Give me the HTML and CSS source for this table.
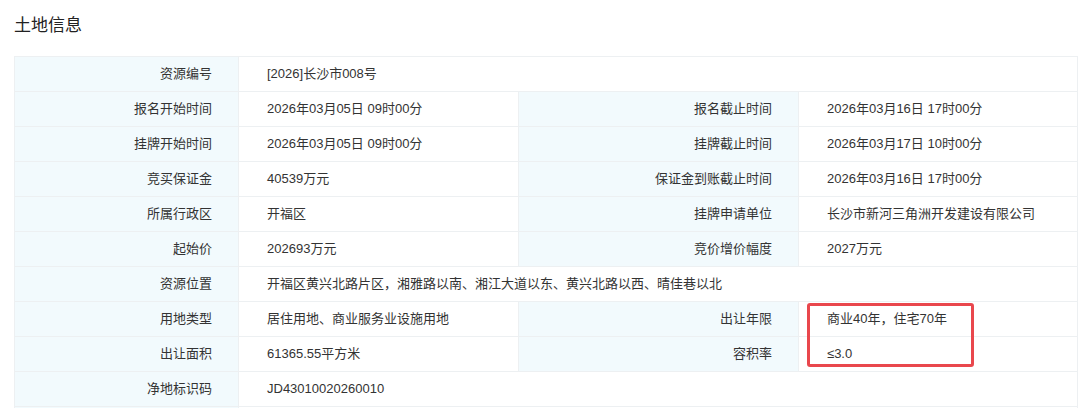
FILE: index.html
```html
<!DOCTYPE html>
<html>

<head>
    <title>土地信息</title>
    <link rel="stylesheet" href="styles.css">
</head>

<body>
    <div class="container">
        <h2 class="title">土地信息</h2>
        <div class="table-wrap">
            <table class="info-table">
                <colgroup>
                    <col class="col-label">
                    <col class="col-value">
                    <col class="col-label2">
                    <col class="col-value2">
                </colgroup>
                <tr>
                    <th>资源编号</th>
                    <td colspan="3">[2026]长沙市008号</td>
                </tr>
                <tr>
                    <th>报名开始时间</th>
                    <td>2026年03月05日 09时00分</td>
                    <th>报名截止时间</th>
                    <td>2026年03月16日 17时00分</td>
                </tr>
                <tr>
                    <th>挂牌开始时间</th>
                    <td>2026年03月05日 09时00分</td>
                    <th>挂牌截止时间</th>
                    <td>2026年03月17日 10时00分</td>
                </tr>
                <tr>
                    <th>竞买保证金</th>
                    <td>40539万元</td>
                    <th>保证金到账截止时间</th>
                    <td>2026年03月16日 17时00分</td>
                </tr>
                <tr>
                    <th>所属行政区</th>
                    <td>开福区</td>
                    <th>挂牌申请单位</th>
                    <td>长沙市新河三角洲开发建设有限公司</td>
                </tr>
                <tr>
                    <th>起始价</th>
                    <td>202693万元</td>
                    <th>竞价增价幅度</th>
                    <td>2027万元</td>
                </tr>
                <tr>
                    <th>资源位置</th>
                    <td colspan="3">开福区黄兴北路片区，湘雅路以南、湘江大道以东、黄兴北路以西、晴佳巷以北</td>
                </tr>
                <tr>
                    <th>用地类型</th>
                    <td>居住用地、商业服务业设施用地</td>
                    <th>出让年限</th>
                    <td>商业40年，住宅70年</td>
                </tr>
                <tr>
                    <th>出让面积</th>
                    <td>61365.55平方米</td>
                    <th>容积率</th>
                    <td>≤3.0</td>
                </tr>
                <tr>
                    <th>净地标识码</th>
                    <td colspan="3">JD43010020260010</td>
                </tr>
                <tr>
                    <th></th>
                    <td colspan="3"></td>
                </tr>
            </table>
            <div class="highlight"></div>
        </div>
    </div>
</body>

</html>
```

FILE: styles.css
```css
body {
    background: #ffffff;
    font-family: 'Liberation Sans', 'Noto Sans CJK SC', sans-serif;
    margin: 0;
    padding: 0;
    color: #333333;
}

.container {
    padding: 0 14px;
}

.title {
    font-size: 17px;
    font-weight: normal;
    color: #222222;
    margin: 0;
    padding-top: 14px;
    line-height: 24px;
    height: 42px;
}

.table-wrap {
    position: relative;
    width: 1063px;
}

.info-table {
    border-collapse: collapse;
    table-layout: fixed;
    width: 1063px;
    font-size: 13px;
}

.col-label {
    width: 224px;
}

.col-value {
    width: 280px;
}

.col-label2 {
    width: 280px;
}

.col-value2 {
    width: 279px;
}

.info-table th,
.info-table td {
    border: 1px solid #edf0f2;
    height: 34px;
    padding: 0;
    line-height: 18px;
    white-space: nowrap;
}

.info-table th {
    background: #f2fafd;
    font-weight: normal;
    text-align: right;
    padding-right: 26px;
    color: #333333;
}

.info-table td {
    background: #ffffff;
    text-align: left;
    padding-left: 28px;
}

.highlight {
    position: absolute;
    left: 793px;
    top: 247px;
    width: 161px;
    height: 58px;
    border: 3px solid #e9474d;
    border-radius: 3px;
}
```
